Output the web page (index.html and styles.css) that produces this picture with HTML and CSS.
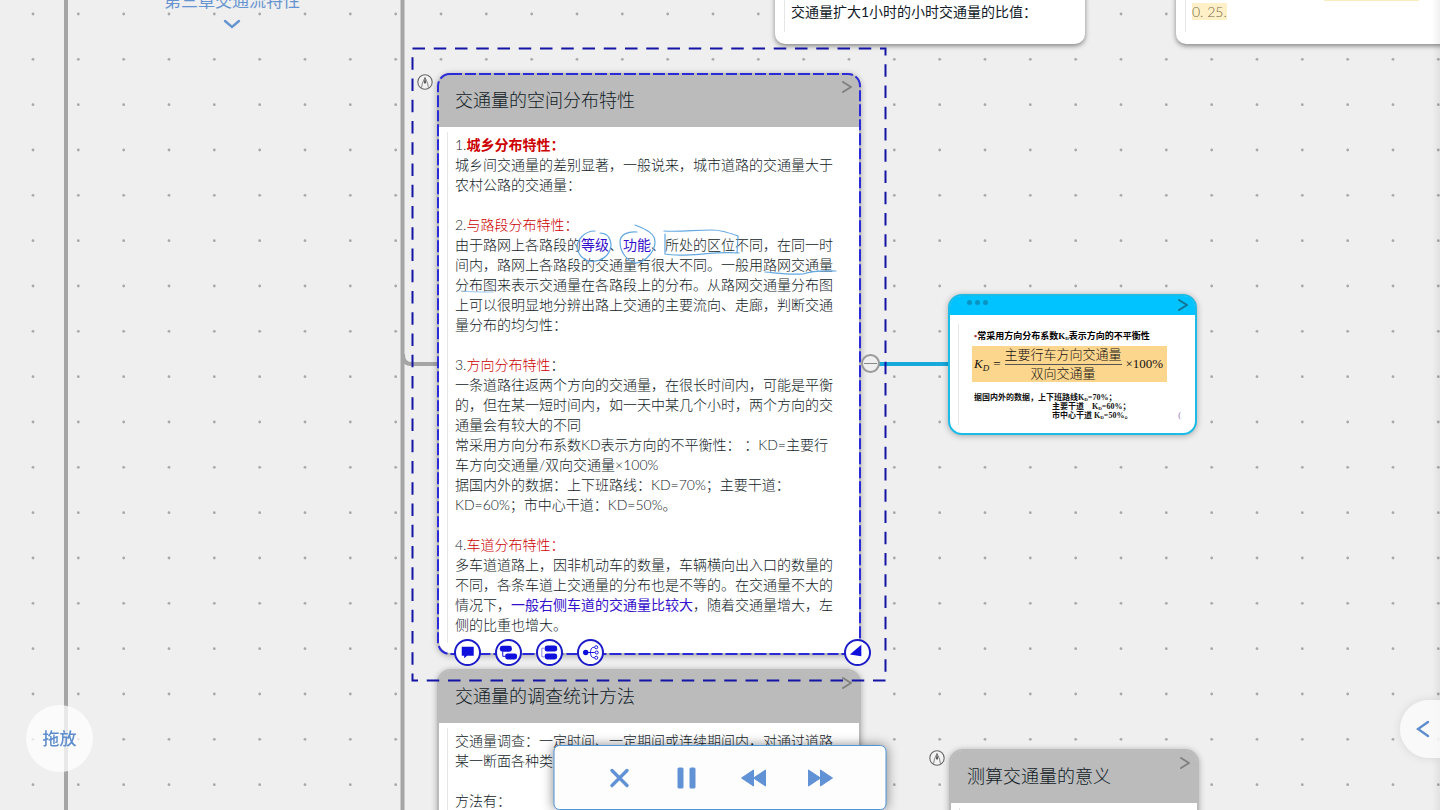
FILE: index.html
```html
<!DOCTYPE html>
<html lang="zh-CN">
<head>
<meta charset="utf-8">
<meta name="viewport" content="width=device-width, initial-scale=1">
<title>第三章交通流特性</title>
<link rel="stylesheet" href="styles.css">
</head>
<body>
<svg class="defs" aria-hidden="true">
  <symbol id="chevron" viewBox="0 0 10 12"><path d="M1 1 9 6 1 11" fill="none" stroke="currentColor" stroke-width="2" stroke-linecap="round" stroke-linejoin="round"/></symbol>
  <symbol id="nib" viewBox="0 0 16 16"><circle cx="8" cy="8" r="7.2" fill="#f3f3f3" stroke="#666" stroke-width="1.1"/><path d="M4.6 13.6 5.4 9.2 8 3.400l2.600 5.800.8 4.400" fill="none" stroke="#666" stroke-width=".8"/><path d="M8 3.400 6.800 8.600 8 10l1.200-1.400z" fill="#555"/></symbol>
</svg>

<main class="canvas">
  <svg class="layer" aria-hidden="true">
    <defs>
      <pattern id="dots" width="136" height="136" patternUnits="userSpaceOnUse" patternTransform="translate(31 12)">
        <g fill="#a9a9a9">
          <circle cx="2" cy="2" r="1.4"/><circle cx="47.3" cy="2" r="1.4"/><circle cx="92.7" cy="2" r="1.4"/>
          <circle cx="2" cy="47.3" r="1.4"/><circle cx="47.3" cy="47.3" r="1.4"/><circle cx="92.7" cy="47.3" r="1.4"/>
          <circle cx="2" cy="92.7" r="1.4"/><circle cx="47.3" cy="92.7" r="1.4"/><circle cx="92.7" cy="92.7" r="1.4"/>
        </g>
      </pattern>
    </defs>
    <rect width="100%" height="100%" fill="url(#dots)"/>
    <g fill="none" stroke="#a5a5a5" stroke-width="4">
      <line x1="66" y1="0" x2="66" y2="100%"/>
      <line x1="402.5" y1="0" x2="402.5" y2="100%"/>
      <path d="M403 354q0 10 8 10h28"/>
    </g>
    <line x1="878" y1="364" x2="950" y2="364" stroke="#17a9dc" stroke-width="4"/>
  </svg>

  <h1 class="crumb">
    <a href="#chapter">第三章交通流特性</a>
    <svg class="crumb-arrow" viewBox="0 0 18 10" aria-hidden="true"><path d="M2 2 9 8 16 2" fill="none" stroke="currentColor" stroke-width="2.4" stroke-linecap="round"/></svg>
  </h1>

  <article class="card plain ratio">
    <p class="text">交通量扩大1小时的小时交通量的比值：</p>
  </article>
  <article class="card plain value">
    <div class="mark-strip"></div>
    <p class="text"><mark>0. 25.</mark></p>
  </article>

  <article class="card survey">
    <header class="card-head">
      <h2>交通量的调查统计方法</h2>
      <button class="open" aria-label="展开"><svg><use href="#chevron"/></svg></button>
    </header>
    <div class="text">
      <p>交通量调查：一定时间、一定期间或连续期间内，对通过道路某一断面各种类</p>
      <p>方法有：</p>
    </div>
  </article>

  <article class="card spatial">
    <header class="card-head">
      <h2>交通量的空间分布特性</h2>
      <button class="open" aria-label="展开"><svg><use href="#chevron"/></svg></button>
    </header>
    <div class="text">
      <p>1.<b class="red">城乡分布特性：</b><br>城乡间交通量的差别显著，一般说来，城市道路的交通量大于农村公路的交通量：</p>
      <p>2.<span class="red">与路段分布特性：</span><br>由于路网上各路段的<span class="blue">等级</span>、<span class="blue">功能</span>、所处的区位不同，在同一时间内，路网上各路段的交通量有很大不同。一般用路网交通量分布图来表示交通量在各路段上的分布。从路网交通量分布图上可以很明显地分辨出路上交通的主要流向、走廊，判断交通量分布的均匀性：</p>
      <p>3.<span class="red">方向分布特性</span>：<br>一条道路往返两个方向的交通量，在很长时间内，可能是平衡的，但在某一短时间内，如一天中某几个小时，两个方向的交通量会有较大的不同<br>常采用方向分布系数KD表示方向的不平衡性： ：KD=主要行车方向交通量/双向交通量×100%<br>据国内外的数据：上下班路线：KD=70%；主要干道：KD=60%；市中心干道：KD=50%。</p>
      <p>4.<span class="red">车道分布特性：</span><br>多车道道路上，因非机动车的数量，车辆横向出入口的数量的不同，各条车道上交通量的分布也是不等的。在交通量不大的情况下，<span class="blue">一般右侧车道的交通量比较大</span>，随着交通量增大，左侧的比重也增大。</p>
    </div>
    <svg class="outline" aria-hidden="true"><rect width="100%" height="100%" rx="12" fill="none" stroke="#2a2ad8" stroke-width="2" stroke-dasharray="12 3 11 3"/></svg>
    <div class="actions">
      <button aria-label="评论"><svg viewBox="-12 -12 24 24"><path d="M-6-6H6.500V3.500H-.500L-3.500 6V3.500H-6z"/></svg></button>
      <button aria-label="添加子节点"><svg viewBox="-12 -12 24 24"><rect x="-9" y="-7" width="12.500" height="6.200" rx="2.500"/><rect x="-3.500" y="1" width="12.500" height="6.200" rx="2.500"/><path d="M-6-1V4H-3" fill="none" stroke="#1010dd"/></svg></button>
      <button aria-label="添加同级节点"><svg viewBox="-12 -12 24 24"><rect x="-5" y="-7.200" width="13" height="6.200" rx="2.500"/><rect x="-5" y="1" width="13" height="6.200" rx="2.500"/><path d="M-5-4.500H-8V4.500H-5" fill="none" stroke="#8585e8"/></svg></button>
      <button aria-label="结构"><svg viewBox="-12 -12 24 24"><circle cx="-5" r="2.800"/><g fill="none" stroke="#1010dd"><path d="M-4 0H4.500M-1 0C1 0-1-5.500 4-5.500M-1 0C1 0-1 5.500 4 5.500"/><circle cx="6" cy="-5.500" r="1.600"/><circle cx="6.500" r="1.600"/><circle cx="6" cy="5.500" r="1.600"/></g></svg></button>
      <button class="resize" aria-label="调整大小"><svg viewBox="-12 -12 24 24"><path d="M4-8V4L-8 2z"/></svg></button>
    </div>
  </article>

  <article class="card formula">
    <header class="card-head">
      <button class="more" aria-label="更多"><i></i><i></i><i></i></button>
      <button class="open" aria-label="展开"><svg><use href="#chevron"/></svg></button>
    </header>
    <div class="slide">
      <h3><span class="bullet">•</span>常采用方向分布系数K<sub>D</sub>表示方向的不平衡性</h3>
      <div class="equation">
        <i>K<sub>D</sub></i><span>=</span>
        <div class="fraction"><span>主要行车方向交通量</span><span>双向交通量</span></div>
        <span>×100%</span>
      </div>
      <div class="data">
        <p>据国内外的数据，上下班路线K<sub>D</sub>=70%；</p>
        <p class="indent">主要干道　K<sub>D</sub>=60%；</p>
        <p class="indent">市中心干道 K<sub>D</sub>=50%。</p>
        <span class="paren">(</span>
      </div>
    </div>
  </article>

  <article class="card meaning">
    <header class="card-head">
      <h2>测算交通量的意义</h2>
      <button class="open" aria-label="展开"><svg><use href="#chevron"/></svg></button>
    </header>
    <div class="text"></div>
  </article>

  <svg class="nib nib-a" aria-hidden="true"><use href="#nib"/></svg>
  <svg class="nib nib-b" aria-hidden="true"><use href="#nib"/></svg>

  <svg class="layer" aria-hidden="true">
    <rect x="412.500" y="48.500" width="473" height="632" pathLength="8840" fill="none" stroke="#1515a5" stroke-width="2" stroke-dasharray="50 35"/>
    <g fill="none" stroke="#62a8e2" stroke-width="1.200" stroke-linecap="round">
      <path d="M595 231C584 231 577 240 577 248C579 258 588 263 596 261C606 259 611 252 611 244C610 236 606 233 600 233"/>
      <path d="M637 232C629 231 620 234 620 242C620 252 627 261 636 263C646 262 655 251 655 242C655 234 648 230 635 225"/>
      <path d="M664 231C680 232 695 230 712 230C722 230 730 233 738 236L737 253M665 234V254C685 258 711 251 739 253"/>
      <path d="M765 272C777 273 788 275 803 274C815 270 824 271 836 271"/>
      <path d="M461 291C470 292 482 292 493 292" stroke="#9cc8ea"/>
    </g>
  </svg>

  <button class="collapse" aria-label="折叠"></button>
</main>

<button class="drag">拖放</button>
<button class="side-tab" aria-label="打开侧栏"><svg viewBox="0 0 14 18"><path d="M12 2 2 9 12 16" fill="none" stroke="currentColor" stroke-width="2.400" stroke-linecap="round"/></svg></button>

<nav class="player" aria-label="播放控制">
  <button aria-label="关闭"><svg viewBox="0 0 28 28"><path d="M6.500 6.500 21.500 21.500M21.500 6.500 6.500 21.500" stroke="currentColor" stroke-width="3.400" stroke-linecap="round"/></svg></button>
  <button aria-label="暂停"><svg viewBox="0 0 28 28"><rect x="5" y="3.500" width="6" height="21" rx="1.500"/><rect x="17" y="3.500" width="6" height="21" rx="1.500"/></svg></button>
  <button aria-label="后退"><svg viewBox="0 0 28 28"><path d="M14 6V22L2 14zM26 6V22L14 14z" stroke="currentColor" stroke-linejoin="round"/></svg></button>
  <button aria-label="快进"><svg viewBox="0 0 28 28"><path d="M2 6V22L14 14zM14 6V22L26 14z" stroke="currentColor" stroke-linejoin="round"/></svg></button>
</nav>
</body>
</html>
```
FILE: styles.css
```css
* { box-sizing: border-box; }

body {
  margin: 0;
  overflow: hidden;
  background: #efefef;
  color: #111b27;
  font-family: Lato, "Noto Sans CJK SC", sans-serif;
  font-size: 14px;
  font-weight: 300;
  line-height: 20px;
}

h1, h2, h3, p { margin: 0; font-weight: inherit; }

button {
  margin: 0;
  padding: 0;
  border: 0;
  background: none;
  color: inherit;
  font: inherit;
  cursor: pointer;
}

.defs { position: absolute; width: 0; height: 0; }

.canvas {
  position: relative;
  height: 100vh;
  overflow: hidden;
}

.canvas::after {
  content: "";
  position: absolute;
  top: 0;
  right: 0;
  bottom: 0;
  width: 8px;
  background: linear-gradient(to right, transparent, rgba(0, 0, 0, 0.06));
}

.layer {
  position: absolute;
  inset: 0;
  width: 100%;
  height: 100%;
  pointer-events: none;
}

.crumb {
  position: absolute;
  left: 164px;
  top: -11px;
  display: flex;
  flex-direction: column;
  align-items: center;
  gap: 6px;
  color: #6794d0;
  font-size: 17px;
  line-height: 24px;
  font-weight: 400;
  white-space: nowrap;
}

.crumb a { color: inherit; text-decoration: none; }
.crumb-arrow { width: 18px; height: 10px; }

/* Cards */
.card {
  position: absolute;
  border: 2px solid #bbb;
  border-radius: 14px;
  background: #fff;
  box-shadow: 0 1px 6px rgba(0, 0, 0, 0.3);
}

.card-head {
  display: flex;
  justify-content: space-between;
  min-height: 52px;
  padding: 6px 7px 0 16px;
  border-radius: 11px 11px 0 0;
  background: #bbb;
}

.card-head h2 {
  padding-top: 5px;
  font-size: 18px;
  line-height: 28px;
}

.open {
  align-self: flex-start;
  display: flex;
  color: #808080;
}

.open svg { width: 10px; height: 12px; }

.text {
  position: relative;
  padding: 8px 22px 19px 16px;
}

.text::before {
  content: "";
  position: absolute;
  left: 8px;
  top: 5px;
  bottom: 10px;
  width: 1px;
  background: #e6e6e6;
}

.text p + p { margin-top: 20px; }

.red { color: #cc0000; }
.blue { color: #3510cc; font-weight: 400; }
b.red { font-weight: 700; }

.spatial, .survey { left: 437px; width: 424px; }
.spatial { top: 73px; }
.survey { top: 669px; }
.meaning { left: 949px; top: 749px; width: 250px; }
.meaning .text { min-height: 60px; }
.spatial .text { padding-bottom: 18px; }

.plain {
  border-color: #fff;
  border-radius: 10px;
  box-shadow: 0 2px 5px rgba(0, 0, 0, 0.45);
}

.plain .text { padding: 12px 14px 20px; }
p.text { font-weight: 400; }
.plain .text::before { left: 7px; }
.ratio { left: 775px; top: -12px; width: 310px; }
.value { left: 1176px; top: -12px; width: 276px; }

.mark-strip {
  position: absolute;
  left: 146px;
  top: 0;
  width: 95px;
  height: 11px;
  background: #fdecc0;
}

mark { background: #fff0c8; color: #746b4e; font-weight: 300; }

.outline {
  position: absolute;
  inset: -1px;
  width: calc(100% + 2px);
  height: calc(100% + 2px);
  overflow: visible;
  pointer-events: none;
}

.actions {
  position: absolute;
  left: 15px;
  right: -12px;
  bottom: -13px;
  display: flex;
  gap: 14px;
}

.actions button {
  display: flex;
  width: 27px;
  height: 27px;
  border: 2px solid #1b1bc8;
  border-radius: 50%;
  background: #fff;
}

.actions svg { width: 100%; height: 100%; overflow: visible; fill: #1010dd; }
.actions .resize { margin-left: auto; }

/* Formula card */
.formula {
  left: 948px;
  top: 294px;
  width: 249px;
  border-color: #1bbbe8;
  background: #fff;
}

.formula .card-head {
  min-height: 19px;
  padding: 3px 7px 0 17px;
  background: #00c3ff;
}

.formula .open { color: #137293; }

.more {
  align-self: flex-start;
  display: flex;
  gap: 3px;
  padding-top: 1px;
}

.more i {
  width: 5px;
  height: 5px;
  border-radius: 50%;
  background: #0b93c2;
}

.slide {
  position: relative;
  padding: 14px 28px 13px 22px;
  color: #111;
  font-family: "Liberation Serif", "Noto Sans CJK SC", serif;
}

.slide::before {
  content: "";
  position: absolute;
  left: 8px;
  top: 9px;
  bottom: 8px;
  width: 1px;
  background: #e6e6e6;
}

.slide h3 {
  padding-left: 2px;
  color: #000;
  font-size: 9px;
  line-height: 14px;
  font-weight: 700;
  white-space: nowrap;
}

.slide sub { font-size: 5px; line-height: 1px; vertical-align: -1px; }
.bullet { color: #a33; }

.equation {
  display: flex;
  align-items: center;
  gap: 4px;
  height: 36px;
  margin-top: 3px;
  padding: 0 2px;
  background: #fdd68e;
  font-size: 13px;
  line-height: 18px;
  white-space: nowrap;
}

.equation sub { font-size: 9px; vertical-align: -3px; }

.fraction {
  display: flex;
  flex-direction: column;
  align-items: center;
}

.fraction span:first-child { border-bottom: 1px solid #555; }

.data {
  position: relative;
  margin-top: 11px;
  padding-left: 2px;
  font-size: 8px;
  line-height: 9px;
  font-weight: 700;
  white-space: nowrap;
}

.data .indent { padding-left: 78px; }

.paren {
  position: absolute;
  right: -14px;
  bottom: 0;
  color: #8a5fc0;
  font-weight: 400;
}

/* Canvas marks */
.nib { position: absolute; width: 16px; height: 16px; }
.nib-a { left: 417px; top: 74px; }
.nib-b { left: 929px; top: 750px; }

.collapse {
  position: absolute;
  left: 861px;
  top: 354px;
  display: flex;
  align-items: center;
  justify-content: center;
  width: 19px;
  height: 19px;
  border: 2px solid #999;
  border-radius: 50%;
  background: #efefef;
}

.collapse::before {
  content: "";
  width: 13px;
  height: 1px;
  background: #888;
}

/* Floating controls */
.drag {
  position: fixed;
  left: 26px;
  bottom: 38px;
  width: 67px;
  height: 67px;
  border-radius: 50%;
  background: rgba(255, 255, 255, 0.75);
  color: #5d8dcd;
  font-size: 17px;
  font-weight: 500;
}

.side-tab {
  position: fixed;
  right: 0;
  bottom: 52px;
  display: flex;
  align-items: center;
  width: 40px;
  height: 58px;
  padding-left: 16px;
  border-radius: 29px 0 0 29px;
  background: rgba(250, 250, 250, 0.85);
  box-shadow: 0 0 10px rgba(0, 0, 0, 0.1);
  color: #5d8dcd;
}

.side-tab svg { width: 14px; height: 18px; }

.player {
  position: fixed;
  left: 50%;
  bottom: 0;
  display: flex;
  justify-content: center;
  width: 333px;
  height: 65px;
  border: 1px solid #4f93d8;
  border-radius: 6px;
  background: #fdfdfd;
  box-shadow: 0 0 12px rgba(0, 0, 0, 0.45);
  transform: translateX(-50%);
  color: #6292d6;
}

.player button {
  display: flex;
  align-items: center;
  justify-content: center;
  width: 67px;
}

.player svg { width: 28px; height: 28px; fill: currentColor; }
```
